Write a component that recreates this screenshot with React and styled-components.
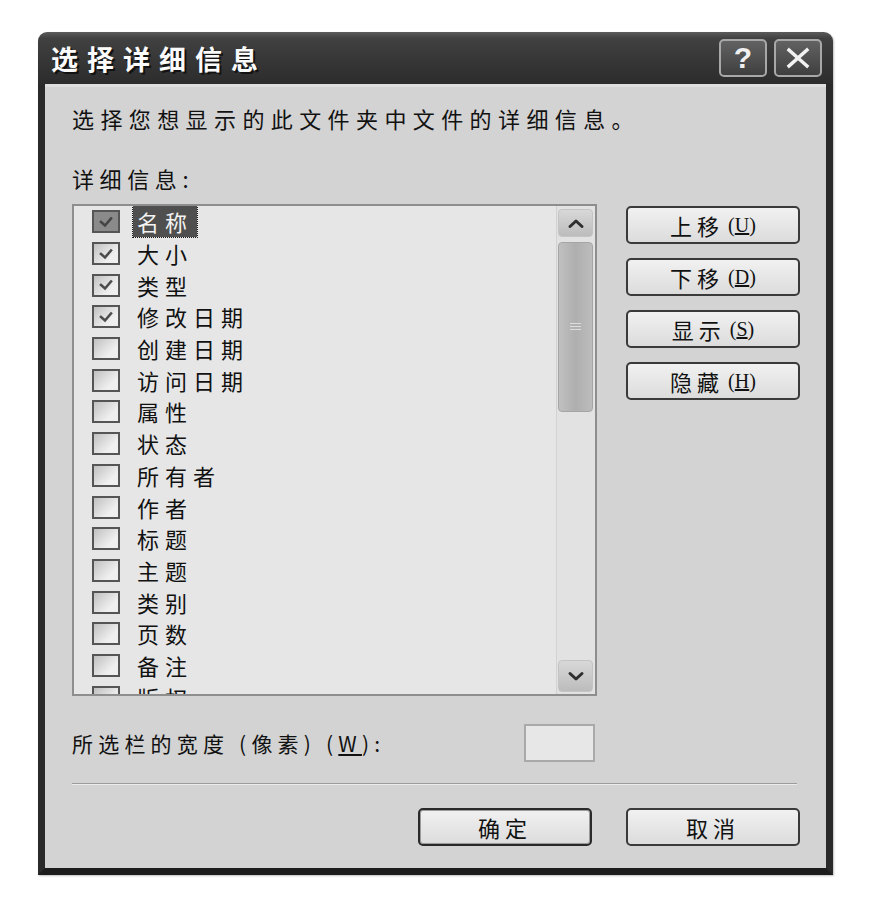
import React from "react"
import styled, { createGlobalStyle } from "styled-components"

const GlobalStyle = createGlobalStyle`
  html, body {
    margin:0;
    padding:0;
    background:#fff;
  }
  body {
    font-family:"Noto Sans CJK SC", "Noto Sans", sans-serif;
    color:#111;
  }
`

const columns = [
  { name: "名称", checked: true, selected: true },
  { name: "大小", checked: true },
  { name: "类型", checked: true },
  { name: "修改日期", checked: true },
  { name: "创建日期" },
  { name: "访问日期" },
  { name: "属性" },
  { name: "状态" },
  { name: "所有者" },
  { name: "作者" },
  { name: "标题" },
  { name: "主题" },
  { name: "类别" },
  { name: "页数" },
  { name: "备注" },
  { name: "版权" },
]

const sideActions = [
  { label: "上移", key: "U" },
  { label: "下移", key: "D" },
  { label: "显示", key: "S" },
  { label: "隐藏", key: "H" },
]

const CheckMark = ({ color }) => (
  <svg width="16" height="12" viewBox="0 0 16 12">
    <path d="M3 6 L7 9.5 L13 2.5" fill="none" stroke={color} strokeWidth="2.6" strokeLinecap="square" />
  </svg>
)

const Chevron = ({ down }) => (
  <svg width="18" height="11" viewBox="0 0 18 11">
    <path
      d={down ? "M3 2.5 L9 8 L15 2.5" : "M3 8.5 L9 3 L15 8.5"}
      fill="none"
      stroke="#2e2e2e"
      strokeWidth="3"
      strokeLinecap="round"
      strokeLinejoin="round"
    />
  </svg>
)

const CloseGlyph = () => (
  <svg width="26" height="22" viewBox="0 0 26 22">
    <path d="M4 3 L22 19 M22 3 L4 19" stroke="#f2f2f2" strokeWidth="3.4" strokeLinecap="square" />
  </svg>
)

const App = () => {
  return (
    <Page>
      <GlobalStyle />
      <Dialog>
        <TitleBar>
          <Title>选择详细信息</Title>
          <CaptionButtons>
            <CaptionButton>?</CaptionButton>
            <CaptionButton><CloseGlyph /></CaptionButton>
          </CaptionButtons>
        </TitleBar>

        <Body>
          <Intro>选择您想显示的此文件夹中文件的详细信息。</Intro>
          <SectionLabel>详细信息:</SectionLabel>

          <Main>
            <ListBox>
              <Rows>
                {columns.map((item) => (
                  <Row key={item.name}>
                    <CheckBox $focused={item.selected}>
                      {item.checked && <CheckMark color={item.selected ? "#444" : "#4c4c4c"} />}
                    </CheckBox>
                    <ItemText $selected={item.selected}>{item.name}</ItemText>
                  </Row>
                ))}
              </Rows>
              <ScrollBar>
                <ScrollButton $h={26}><Chevron /></ScrollButton>
                <Thumb><Grip /></Thumb>
                <Track />
                <ScrollButton $h={30}><Chevron down /></ScrollButton>
              </ScrollBar>
            </ListBox>

            <SideButtons>
              {sideActions.map((a) => (
                <Button key={a.key}>
                  <ButtonText>{a.label}</ButtonText>
                  <Mnemonic>(<u>{a.key}</u>)</Mnemonic>
                </Button>
              ))}
            </SideButtons>
          </Main>

          <WidthRow>
            <WidthLabel>所选栏的宽度 (像素) (<u>W</u>):</WidthLabel>
            <WidthInput />
          </WidthRow>

          <Separator />

          <Footer>
            <Button $default><ButtonText>确定</ButtonText></Button>
            <Button><ButtonText>取消</ButtonText></Button>
          </Footer>
        </Body>
      </Dialog>
    </Page>
  )
}

export default App

const Page = styled.div`
  padding:32px 0 0 38px;
  min-height:907px;
  box-sizing:border-box;
`

const Dialog = styled.div`
  width:795px;
  border-radius:9px 9px 0 0;
  overflow:hidden;
  box-shadow:1px 1px 2px rgba(0,0,0,.25);
`

const TitleBar = styled.div`
  height:52px;
  display:flex;
  align-items:center;
  justify-content:space-between;
  padding:0 11px 0 13px;
  background:linear-gradient(#5b5b5b 0%, #414141 12%, #353535 60%, #2c2c2c 100%);
`

const Title = styled.span`
  font-size:27px;
  font-weight:700;
  letter-spacing:9px;
  color:#fbfbfb;
  text-shadow:2px 2px 0 #121212;
`

const CaptionButtons = styled.div`
  display:flex;
  gap:7px;
`

const CaptionButton = styled.div`
  width:48px;
  height:38px;
  box-sizing:border-box;
  display:flex;
  align-items:center;
  justify-content:center;
  border:2px solid #a8a8a8;
  border-radius:5px;
  background:linear-gradient(#626262, #3f3f3f);
  color:#f0f0f0;
  font-family:"Liberation Sans", Arial, sans-serif;
  font-weight:700;
  font-size:30px;
`

const Body = styled.div`
  background:#d3d3d3;
  border:7px solid #2a2a2a;
  border-top:none;
  border-bottom-color:#1c1c1c;
  padding:20px 26px 22px 27px;
  box-shadow:inset 0 3px 0 #dedede;
`

const Intro = styled.div`
  font-size:22px;
  line-height:28px;
  letter-spacing:6.4px;
  white-space:nowrap;
`

const SectionLabel = styled.div`
  margin-top:32px;
  font-size:22px;
  line-height:28px;
  letter-spacing:5.6px;
`

const Main = styled.div`
  display:flex;
  gap:29px;
  margin-top:12px;
`

const ListBox = styled.div`
  width:525px;
  height:492px;
  box-sizing:border-box;
  display:flex;
  border:2px solid #8e8e8e;
  background:#e6e6e6;
`

const Rows = styled.div`
  flex:1;
  overflow:hidden;
`

const Row = styled.div`
  height:31.7px;
  display:flex;
  align-items:center;
  padding-left:18px;
`

const CheckBox = styled.div`
  width:28px;
  height:23px;
  flex-shrink:0;
  box-sizing:border-box;
  display:flex;
  align-items:center;
  justify-content:center;
  border:2px solid #555;
  background:${(p) => (p.$focused ? "#8a8a8a" : "linear-gradient(135deg, #c0c0c0, #efefef 70%)")};
`

const ItemText = styled.span`
  margin-left:13px;
  padding:0 4px;
  height:31px;
  line-height:31px;
  font-size:22px;
  letter-spacing:6px;
  color:${(p) => (p.$selected ? "#f3f3f3" : "#111")};
  background:${(p) => (p.$selected ? "#4f4f4f" : "transparent")};
  outline:${(p) => (p.$selected ? "1px dotted #1a1a1a" : "none")};
`

const ScrollBar = styled.div`
  width:39px;
  flex-shrink:0;
  box-sizing:border-box;
  display:flex;
  flex-direction:column;
  padding:3px 2px 2px 1px;
  background:#e2e2e2;
  border-left:1px solid #d2d2d2;
`

const ScrollButton = styled.div`
  height:${(p) => p.$h}px;
  display:flex;
  align-items:center;
  justify-content:center;
  border-radius:4px;
  border:1px solid #c4c4c4;
  background:linear-gradient(#d8d8d8, #bcbcbc);
`

const Thumb = styled.div`
  margin-top:5px;
  height:168px;
  display:flex;
  align-items:center;
  justify-content:center;
  border-radius:4px;
  border:1px solid #a5a5a5;
  background:linear-gradient(90deg, #c0c0c0, #afafaf 50%, #bcbcbc);
`

const Grip = styled.div`
  width:11px;
  height:9px;
  background:repeating-linear-gradient(#dcdcdc 0 1px, transparent 1px 3px);
`

const Track = styled.div`
  flex:1;
`

const SideButtons = styled.div`
  display:flex;
  flex-direction:column;
  gap:14px;
  padding-top:2px;
`

const Button = styled.div`
  width:174px;
  height:38px;
  box-sizing:border-box;
  display:flex;
  align-items:center;
  justify-content:center;
  gap:4px;
  border:2px solid ${(p) => (p.$default ? "#2a2a2a" : "#3a3a3a")};
  border-radius:5px;
  background:linear-gradient(#f1f1f1, #dcdcdc);
  box-shadow:${(p) => (p.$default ? "inset 0 0 0 1px #9a9a9a" : "none")};
`

const ButtonText = styled.span`
  font-size:22px;
  letter-spacing:5px;
  line-height:1;
`

const Mnemonic = styled.span`
  font-family:"Liberation Serif", serif;
  font-size:20px;
  line-height:1;
`

const WidthRow = styled.div`
  width:523px;
  margin-top:28px;
  display:flex;
  align-items:center;
  justify-content:space-between;
`

const WidthLabel = styled.span`
  font-size:21px;
  letter-spacing:5.2px;
`

const WidthInput = styled.div`
  width:71px;
  height:38px;
  box-sizing:border-box;
  border:2px solid #a9a9a9;
  background:#e7e7e7;
`

const Separator = styled.div`
  margin:21px 3px 0 0;
  border-top:1px solid #9c9c9c;
  border-bottom:1px solid #ececec;
`

const Footer = styled.div`
  margin-top:23px;
  display:flex;
  justify-content:flex-end;
  gap:34px;
`
